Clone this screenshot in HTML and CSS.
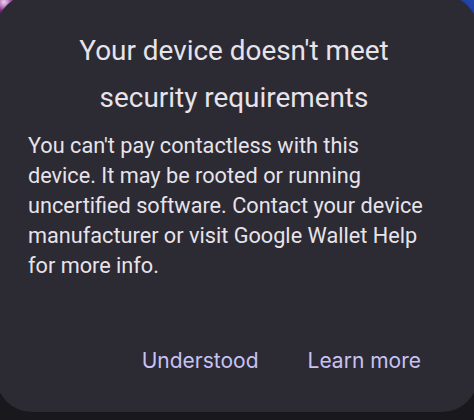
FILE: index.html
```html
<!DOCTYPE html>
<html>
<head>
<meta charset="utf-8">
<link rel="stylesheet" href="styles.css">
</head>
<body>
<div class="screen">
  <div class="dialog">
    <h1 class="title">Your device doesn't meet<br>security requirements</h1>
    <p class="message">You can't pay contactless with this device. It may be rooted or running uncertified software. Contact your device manufacturer or visit Google Wallet Help for more info.</p>
    <div class="actions">
      <span class="action">Understood</span>
      <span class="action">Learn more</span>
    </div>
  </div>
</div>
</body>
</html>
```

FILE: styles.css
```css
html, body {
  margin: 0;
  padding: 0;
}
body {
  background: #19181d;
  width: 474px;
  height: 420px;
  overflow: hidden;
}
.screen {
  width: 474px;
  height: 420px;
  overflow: hidden;
  background:
    radial-gradient(circle at 4px 2px, #e8d6ec 0, #c58ac9 4px, #7c2c7f 9px, rgba(90,30,100,0) 16px),
    radial-gradient(circle at 474px 0px, #2347b0 0, #1d3b94 22px, rgba(28,40,90,0) 40px),
    #19181d;
}
.dialog {
  margin: -5px -4px 0 -4px;
  height: 417px;
  box-sizing: border-box;
  background: #2c2a33;
  border-radius: 36px;
  padding: 32px 49px 0 32px;
  color: #e7e3ea;
  font-family: Roboto, "Noto Sans", sans-serif;
}
.title {
  margin: 0 -11px 0 0;
  font-family: Roboto, sans-serif;
  font-weight: 400;
  font-size: 27.9px;
  line-height: 47px;
  text-align: center;
}
.message {
  margin: 10px 0 0 0;
  font-size: 21.7px;
  line-height: 30px;
}
.actions {
  display: flex;
  justify-content: flex-end;
  gap: 49px;
  margin-top: 68px;
  padding-right: 8px;
}
.action {
  color: #c7c3f4;
  font-family: Inter, Roboto, sans-serif;
  font-size: 21px;
  line-height: 24px;
  font-weight: 400;
}
```
